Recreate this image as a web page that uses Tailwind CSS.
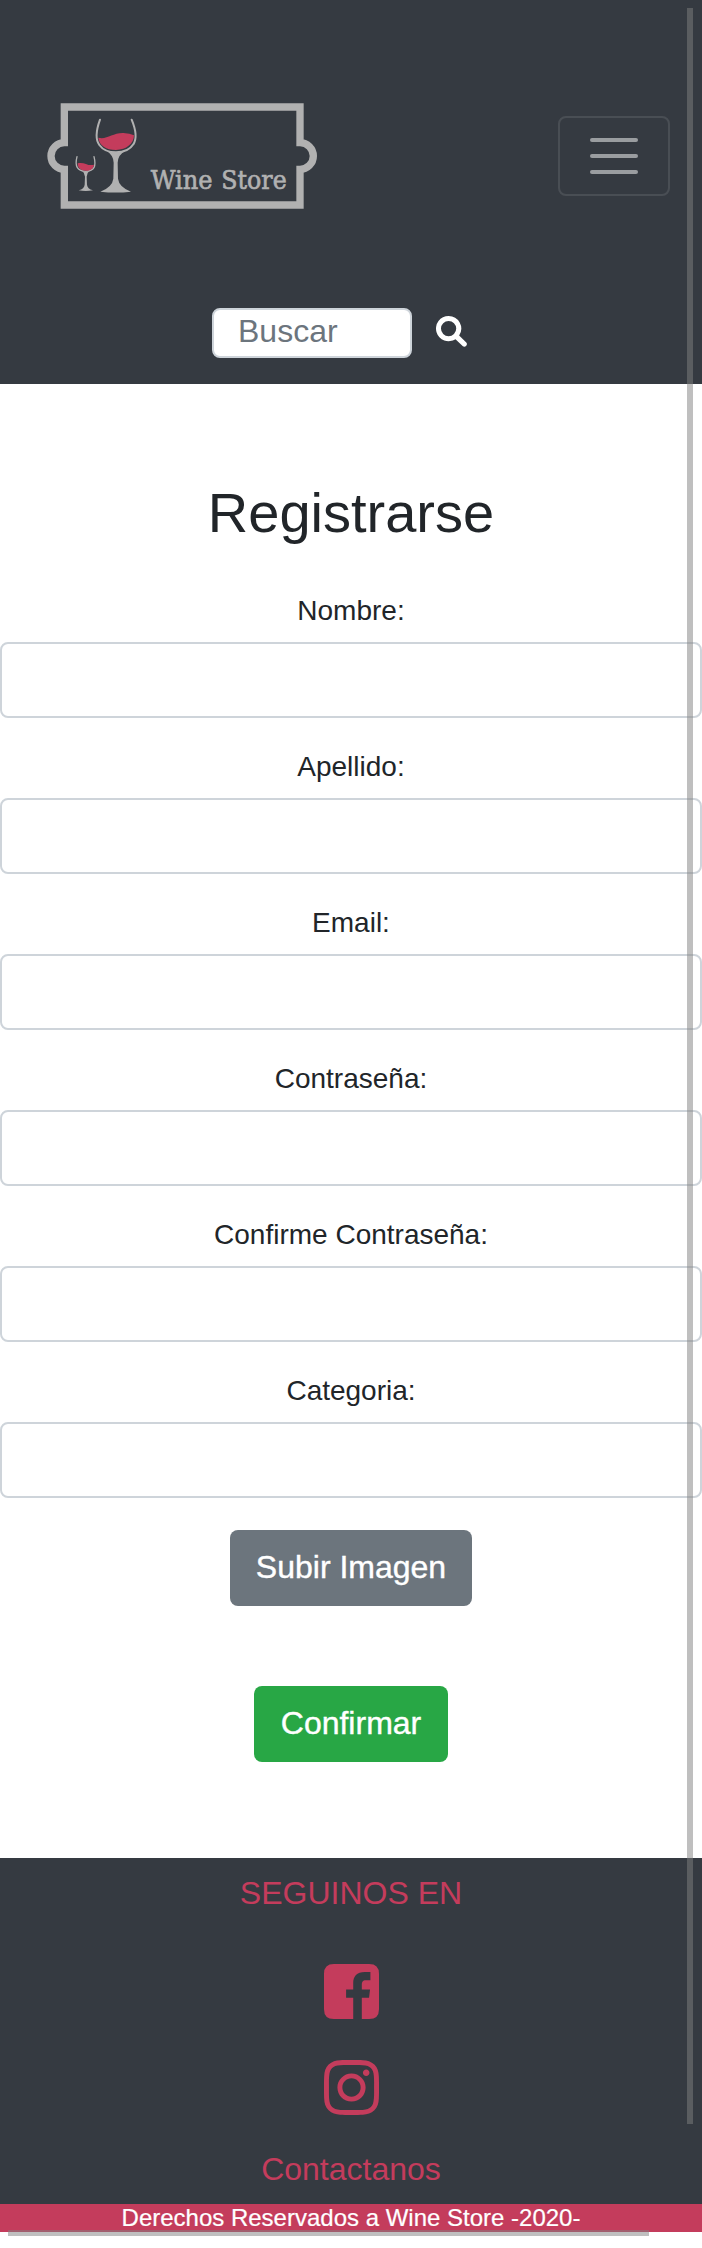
<!DOCTYPE html>
<html lang="es">
<head>
<meta charset="utf-8">
<title>Wine Store</title>
<script src="https://cdn.jsdelivr.net/npm/@tailwindcss/browser@4"></script>
</head>
<body class="relative w-[702px] h-[2248px] overflow-hidden bg-white text-[#212529] font-['Liberation_Sans',Arial,sans-serif]">
<header class="h-[384px] bg-[#353a41] flex flex-col">
  <div class="h-[308px] flex items-center justify-between pl-[30px] pr-8">
    <svg class="w-[300px] h-[130px] mt-0.5" viewBox="0 0 900 390" aria-label="Wine Store">
      <path d="M103 51H810V158A40 40 0 0 1 810 238V345H103V238A40 40 0 0 1 103 158Z" fill="none" stroke="#b1b1b1" stroke-width="22"/>
      <path d="M210 89C198 122 196 149 208 165C221 183 242 187 258 187C276 187 299 181 310 163C322 145 317 118 305 89" fill="none" stroke="#b1b1b1" stroke-width="6" stroke-linecap="round"/>
      <path d="M205 143C230 150 248 128 280 129Q300 130 312 136C312 160 289 180 258 180C229 180 207 166 205 143Z" fill="#c43c5c"/>
      <path d="M230 183Q258 191 286 183Q264 194 263 218L264 266Q267 291 303 305Q257 310 211 305Q247 291 250 266L251 218Q250 195 230 183Z" fill="#b1b1b1"/>
      <path d="M141 200C134 228 141 243 167 244C194 243 199 228 192 200" fill="none" stroke="#b1b1b1" stroke-width="4" stroke-linecap="round"/>
      <path d="M143 220C162 214 174 230 192 224C190 236 182 242 167 242C153 242 143 235 143 220Z" fill="#c43c5c"/>
      <path d="M157 243Q167 248 178 243Q171 248 170 260L171 284Q172 296 189 301Q167 305 146 301Q163 296 164 284L165 260Q164 249 157 243Z" fill="#b1b1b1"/>
      <g font-family="'DejaVu Serif', serif" font-size="77" fill="#b1b1b1" stroke="#b1b1b1" stroke-width="2">
        <text x="362" y="297" textLength="186" lengthAdjust="spacingAndGlyphs">Wine</text>
        <text x="574" y="297" textLength="196" lengthAdjust="spacingAndGlyphs">Store</text>
      </g>
    </svg>
    <button class="mt-1 w-28 h-20 rounded-lg border-2 border-white/10 flex flex-col items-center justify-center gap-3" aria-label="Menú">
      <span class="w-12 h-1 rounded-full bg-white/50"></span>
      <span class="w-12 h-1 rounded-full bg-white/50"></span>
      <span class="w-12 h-1 rounded-full bg-white/50"></span>
    </button>
  </div>
  <form class="flex items-center pl-[212px] gap-6 h-[50px]">
    <input type="text" placeholder="Buscar" class="w-[200px] h-[50px] rounded-lg border-2 border-[#ced4da] bg-white pl-6 pb-1 text-[32px] placeholder:text-[#6c757d]">
    <svg class="w-[31px] h-[31px] -mt-[3px] fill-white" viewBox="0 0 512 512"><path d="M208 0a208 208 0 0 1 174 322L500 438Q522 462 500 490Q474 520 444 500L322 382A208 208 0 1 1 208 0ZM208 82a126 126 0 1 0 0 252a126 126 0 1 0 0-252Z"/></svg>
  </form>
</header>
<main class="h-[1474px] flex flex-col items-center pt-[95px]">
  <h1 class="text-[56px] leading-[67px]">Registrarse</h1>
  <form class="w-full flex flex-col items-center pt-11 text-[28px] leading-[42px]">
    <label class="mb-2.5">Nombre:</label>
    <input class="w-full h-[76px] rounded-lg border-2 border-[#ced4da] mb-7">
    <label class="mb-2.5">Apellido:</label>
    <input class="w-full h-[76px] rounded-lg border-2 border-[#ced4da] mb-7">
    <label class="mb-2.5">Email:</label>
    <input class="w-full h-[76px] rounded-lg border-2 border-[#ced4da] mb-7">
    <label class="mb-2.5">Contraseña:</label>
    <input class="w-full h-[76px] rounded-lg border-2 border-[#ced4da] mb-7">
    <label class="mb-2.5">Confirme Contraseña:</label>
    <input class="w-full h-[76px] rounded-lg border-2 border-[#ced4da] mb-7">
    <label class="mb-2.5">Categoria:</label>
    <input class="w-full h-[76px] rounded-lg border-2 border-[#ced4da] mb-8">
    <button type="button" class="w-[242px] h-[76px] pb-0.5 rounded-lg bg-[#6c757d] text-white text-[32px] [-webkit-text-stroke:0.4px_white] mb-20">Subir Imagen</button>
    <button type="button" class="w-[194px] h-[76px] pb-0.5 rounded-lg bg-[#28a745] text-white text-[32px] [-webkit-text-stroke:0.4px_white]">Confirmar</button>
  </form>
</main>
<footer>
  <div class="h-[346px] bg-[#353a41] text-[#c43c5c] text-[32px] leading-[48px] flex flex-col items-center pt-[11px]">
    <p>SEGUINOS EN</p>
    <svg class="w-[55px] h-[63px] mt-[43px] fill-current" viewBox="0 0 448 512"><path d="M80 32H368Q448 32 448 112V400Q448 480 368 480H308V306H367L375 239H308V204C308 177 315 164 340 164H378V97H333C266 97 238 132 238 189V239H180V306H238V480H80Q0 480 0 400V112Q0 32 80 32Z"/></svg>
    <svg class="w-[55px] h-[63px] mt-[33px] fill-current" viewBox="0 0 448 512"><path d="M224.100 141c-63.600 0-114.900 51.300-114.900 114.900s51.300 114.900 114.900 114.900S339 319.500 339 255.900 287.700 141 224.100 141zm0 189.600c-41.100 0-74.700-33.500-74.700-74.700s33.500-74.700 74.700-74.700 74.700 33.500 74.700 74.700-33.600 74.700-74.700 74.700zm146.400-194.300c0 14.900-12 26.800-26.800 26.800-14.900 0-26.800-12-26.800-26.800s12-26.800 26.800-26.800 26.800 12 26.800 26.800zm76.100 27.200c-1.700-35.900-9.900-67.700-36.200-93.900-26.200-26.200-58-34.400-93.900-36.200-37-2.100-147.900-2.100-184.900 0-35.800 1.700-67.600 9.900-93.900 36.100s-34.400 58-36.200 93.900c-2.100 37-2.100 147.900 0 184.900 1.700 35.900 9.900 67.700 36.200 93.900s58 34.400 93.900 36.200c37 2.100 147.900 2.100 184.900 0 35.900-1.700 67.700-9.900 93.900-36.200 26.200-26.200 34.400-58 36.200-93.900 2.100-37 2.100-147.800 0-184.800zM398.800 388c-7.800 19.600-22.900 34.700-42.600 42.600-29.500 11.700-99.500 9-132.100 9s-102.700 2.600-132.100-9c-19.600-7.800-34.700-22.900-42.600-42.600-11.700-29.500-9-99.500-9-132.100s-2.600-102.700 9-132.100c7.800-19.600 22.900-34.700 42.600-42.600 29.500-11.700 99.500-9 132.100-9s102.700-2.600 132.100 9c19.600 7.800 34.700 22.900 42.600 42.600 11.700 29.500 9 99.500 9 132.100s2.700 102.700-9 132.100z"/></svg>
    <p class="mt-[26px]">Contactanos</p>
  </div>
  <div class="h-7 bg-[#c43c5c] text-white text-2xl leading-[27px] text-center [-webkit-text-stroke:0.2px_white]">Derechos Reservados a Wine Store -2020-</div>
</footer>
<div class="absolute left-[687px] top-2 w-1.5 h-[2116px] bg-[#808080]/50"></div>
<div class="absolute left-2 top-[2230px] w-[641px] h-1.5 bg-[#808080]/50"></div>
</body>
</html>
